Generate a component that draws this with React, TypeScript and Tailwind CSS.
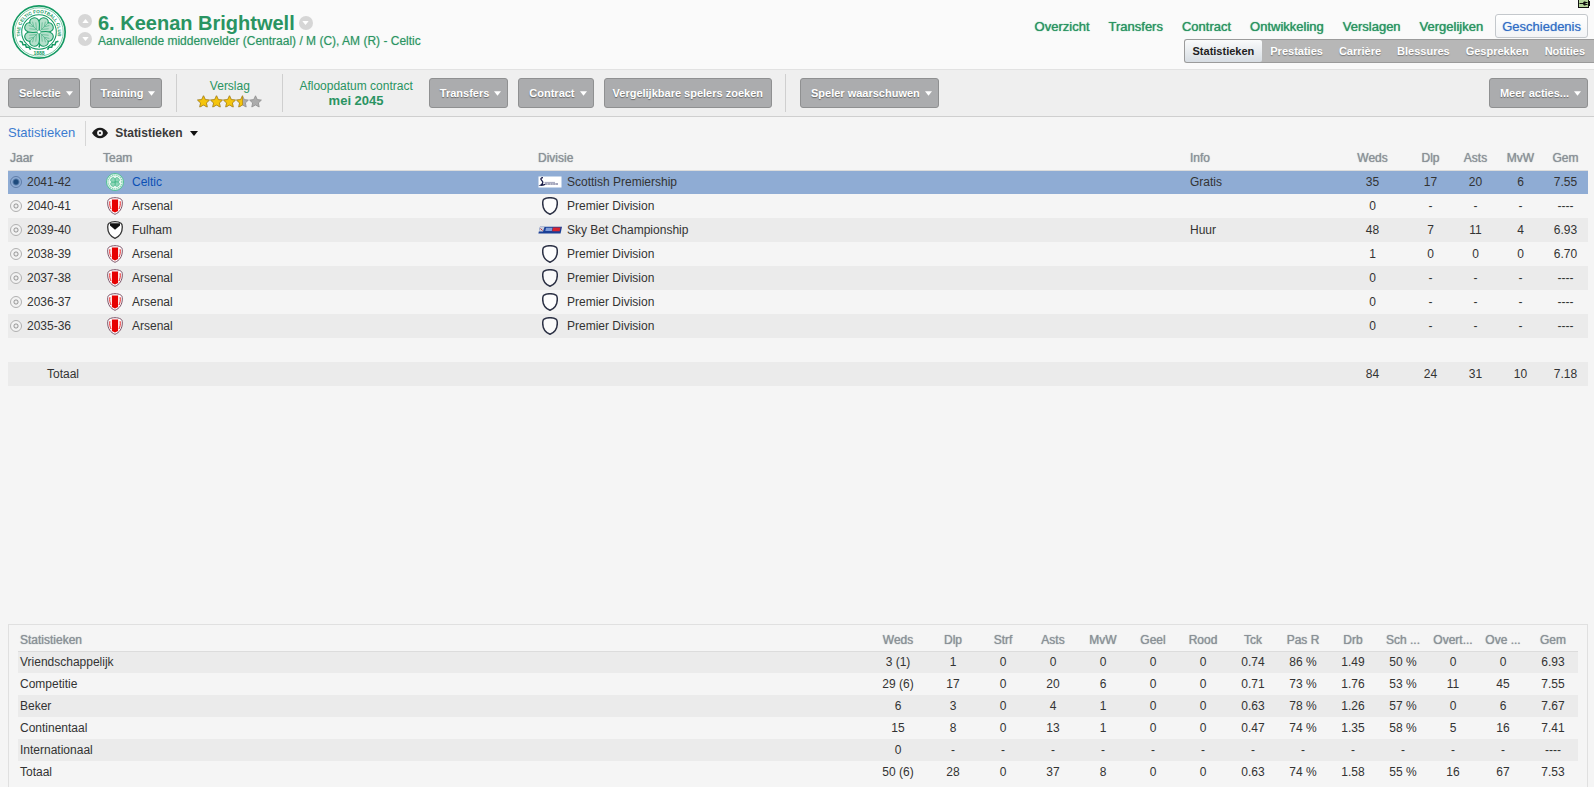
import React, { FC, ReactNode, useState } from 'react';
import clsx from 'clsx';

interface Season {
  year: string;
  team: 'Celtic' | 'Arsenal' | 'Fulham';
  division: string;
  info?: string;
  stats: string[];
}

const seasons: Season[] = [
  { year: '2041-42', team: 'Celtic', division: 'Scottish Premiership', info: 'Gratis', stats: ['35', '17', '20', '6', '7.55'] },
  { year: '2040-41', team: 'Arsenal', division: 'Premier Division', stats: ['0', '-', '-', '-', '----'] },
  { year: '2039-40', team: 'Fulham', division: 'Sky Bet Championship', info: 'Huur', stats: ['48', '7', '11', '4', '6.93'] },
  { year: '2038-39', team: 'Arsenal', division: 'Premier Division', stats: ['1', '0', '0', '0', '6.70'] },
  { year: '2037-38', team: 'Arsenal', division: 'Premier Division', stats: ['0', '-', '-', '-', '----'] },
  { year: '2036-37', team: 'Arsenal', division: 'Premier Division', stats: ['0', '-', '-', '-', '----'] },
  { year: '2035-36', team: 'Arsenal', division: 'Premier Division', stats: ['0', '-', '-', '-', '----'] },
];

const seasonTotal = ['84', '24', '31', '10', '7.18'];

const statColumns = ['Weds', 'Dlp', 'Strf', 'Asts', 'MvW', 'Geel', 'Rood', 'Tck', 'Pas R', 'Drb', 'Sch ...', 'Overt...', 'Ove ...', 'Gem'];

const competitions = [
  { name: 'Vriendschappelijk', stats: ['3 (1)', '1', '0', '0', '0', '0', '0', '0.74', '86 %', '1.49', '50 %', '0', '0', '6.93'] },
  { name: 'Competitie', stats: ['29 (6)', '17', '0', '20', '6', '0', '0', '0.71', '73 %', '1.76', '53 %', '11', '45', '7.55'] },
  { name: 'Beker', stats: ['6', '3', '0', '4', '1', '0', '0', '0.63', '78 %', '1.26', '57 %', '0', '6', '7.67'] },
  { name: 'Continentaal', stats: ['15', '8', '0', '13', '1', '0', '0', '0.47', '74 %', '1.35', '58 %', '5', '16', '7.41'] },
  { name: 'Internationaal', stats: ['0', '-', '-', '-', '-', '-', '-', '-', '-', '-', '-', '-', '-', '----'] },
  { name: 'Totaal', stats: ['50 (6)', '28', '0', '37', '8', '0', '0', '0.63', '74 %', '1.58', '55 %', '16', '67', '7.53'] },
];

const mainNav = ['Overzicht', 'Transfers', 'Contract', 'Ontwikkeling', 'Verslagen', 'Vergelijken', 'Geschiedenis'];
const subNav = ['Statistieken', 'Prestaties', 'Carrière', 'Blessures', 'Gesprekken', 'Notities'];

const Clover = () => (
  <g transform="translate(32 32) scale(1.08)">
    <path d="M0 0C1 6 2 11 0 17" stroke="#149a63" strokeWidth="1.6" fill="none" />
    {[45, 135, 225, 315].map((angle) => (
      <g key={angle} transform={`rotate(${angle})`}>
        <path
          d="M0 0C-3 -3 -9 -6 -9 -11C-9 -16 -2 -18 0 -14C2 -18 9 -16 9 -11C9 -6 3 -3 0 0Z"
          fill="#b5e0cb"
          stroke="#149a63"
          strokeWidth="1.2"
        />
        <path d="M0 -1V-13M0 -4L-5 -10M0 -4L5 -10M0 -8L-3 -13M0 -8L3 -13" stroke="#58b88f" strokeWidth=".8" fill="none" />
      </g>
    ))}
    <circle r="1.6" fill="#fff" />
  </g>
);

const CelticLogo: FC<{ className: string }> = ({ className }) => (
  <svg viewBox="0 0 64 64" className={className} aria-label="Celtic">
    <defs>
      <path id="ring" d="M15.2 46.8A22.4 22.4 0 1 1 48.8 46.8" />
    </defs>
    <circle cx="32" cy="32" r="31" fill="#fff" stroke="#149a63" strokeWidth="2" />
    <circle cx="32" cy="32" r="28.7" fill="none" stroke="#6cc29b" strokeWidth="1" />
    <circle cx="32" cy="32" r="20.5" fill="#fff" stroke="#149a63" strokeWidth="1.2" />
    <text fill="#149a63" fontSize="5.5" fontWeight="bold" fontFamily="Liberation Sans">
      <textPath href="#ring" startOffset="50%" textAnchor="middle">
        THE CELTIC FOOTBALL CLUB
      </textPath>
    </text>
    <Clover />
    <path d="M9 43L12 44L13 47L16 47L17 50L20 50L22 53M55 43L52 44L51 47L48 47L47 50L44 50L42 53" stroke="#149a63" strokeWidth="1.8" fill="none" />
    <text x="32" y="59" textAnchor="middle" fill="#149a63" fontSize="6" fontWeight="bold" fontFamily="Liberation Sans">
      1888
    </text>
  </svg>
);

const SmallCeltic = () => (
  <svg viewBox="0 0 18 18" className="size-[18px]">
    <circle cx="9" cy="9" r="8.5" fill="#e9f7f0" stroke="#4fc193" />
    <circle cx="9" cy="9" r="6.9" fill="none" stroke="#7fd1af" strokeWidth="1.2" strokeDasharray="1.2 .9" />
    <g transform="translate(9 9)">
      {[45, 135, 225, 315].map((angle) => (
        <path key={angle} transform={`rotate(${angle})`} d="M0 0C-3 -2 -3 -5 0 -5C3 -5 3 -2 0 0Z" fill="#8fd6b8" stroke="#35b17f" strokeWidth=".6" />
      ))}
    </g>
  </svg>
);

const SHIELD = 'M2 2.2C4 .9 6.2 .7 8 .7S12 .9 14 2.2C15.2 3 15.3 4 15.3 6C15.3 11.5 12.5 15.5 8 17.3C3.5 15.5 .7 11.5 .7 6C.7 4 .8 3 2 2.2Z';

const TeamCrest: FC<{ team: Season['team'] }> = ({ team }) => {
  if (team === 'Celtic') return <SmallCeltic />;
  if (team === 'Fulham') {
    return (
      <svg viewBox="0 0 16 18" className="h-[18px] w-4">
        <path d={SHIELD} fill="#fff" stroke="#333" strokeWidth="1.3" />
        <path d="M3 2.2H13V4.5L8 8.8L3 4.5Z" fill="#111" />
      </svg>
    );
  }
  return (
    <svg viewBox="0 0 16 18" className="h-[18px] w-4">
      <path d={SHIELD} fill="#fff" stroke="#7c5368" strokeWidth="1" />
      <path d="M4.9 2.6H11.1V14L8 15.6L4.9 14Z" fill="#e60000" />
      <path d="M2.9 4.2C2.5 7.5 2.9 9.8 4 12M13.1 4.2C13.5 7.5 13.1 9.8 12 12" stroke="#e60000" strokeWidth=".9" fill="none" />
    </svg>
  );
};

const DivisionLogo: FC<{ name: string }> = ({ name }) => {
  if (name === 'Scottish Premiership') {
    return (
      <svg viewBox="0 0 24 12" className="h-3 w-6">
        <rect x=".5" y=".5" width="23" height="11" fill="#fff" />
        <path d="M5 1.6C2.8 1.6 2.2 3.2 3.7 4.4C5.2 5.6 5.5 7.5 2.6 9.2C4.5 9.3 6.5 9 7 8.2" stroke="#1b1f4a" strokeWidth="1.3" fill="none" />
        <path d="M6.5 6.4H17" stroke="#8a8dab" strokeWidth=".8" />
        <path d="M7 8H20" stroke="#4c507a" strokeWidth="1.1" strokeDasharray="2.4 .3" />
      </svg>
    );
  }
  if (name === 'Sky Bet Championship') {
    return (
      <svg viewBox="0 0 24 8" className="h-2 w-6">
        <path d="M2 .8H24L22.6 7.4H.4Z" fill="#1a3f96" />
        <path d="M2 1H6.5L5 5.5H.8Z" fill="#c9cfdd" />
        <path d="M2.5 2.5L4.5 4.5" stroke="#c33" strokeWidth="1" />
        <path d="M8 1.8H14.5L13.8 5H7.3Z" fill="#7e9bd6" />
        <path d="M15 1.5H22.5L21.7 5.3H14.2Z" fill="#d8232f" />
      </svg>
    );
  }
  return (
    <svg viewBox="0 0 16 18" className="h-[18px] w-4">
      <path d={SHIELD} fill="#fff" fillOpacity=".75" stroke="#2b3044" strokeWidth="1.5" />
    </svg>
  );
};

const Caret: FC<{ className?: string; up?: boolean }> = ({ className = 'h-[5px] w-2', up }) => (
  <svg viewBox="0 0 8 5" className={className} fill="currentColor">
    <path d={up ? 'M0 5H8L4 0Z' : 'M0 0H8L4 5Z'} />
  </svg>
);

const RoundButton: FC<{ label: string; up?: boolean }> = ({ label, up }) => (
  <button aria-label={label} className="flex size-[14px] items-center justify-center rounded-full bg-[#d6d6d6] text-white">
    <Caret up={up} className="h-1 w-[7px]" />
  </button>
);

const ActionButton: FC<{ children: ReactNode; menu?: boolean }> = ({ children, menu = true }) => (
  <button
    className={clsx(
      'flex h-[30px] items-center gap-[5px] rounded-[3px] border border-[#8f9091] bg-[#abacae] text-[11px] font-bold text-white [text-shadow:0_1px_1px_#666]',
      menu ? 'pr-[6px] pl-[10px]' : 'px-2',
    )}
  >
    {children}
    {menu && <Caret className="mt-px h-[5px] w-[7px]" />}
  </button>
);

const STAR = 'M6.5 .8L8.3 4.6L12.4 5.1L9.4 7.9L10.2 12L6.5 10L2.8 12L3.6 7.9L.6 5.1L4.7 4.6Z';

const Stars = () => (
  <div className="flex" role="img" aria-label="3,5 sterren">
    {[1, 1, 1, 0.5, 0].map((fill, i) => (
      <svg key={i} viewBox="0 0 13 13" className="size-[13px]">
        <path d={STAR} fill="#acacac" stroke="#8e8e8e" strokeWidth=".8" />
        {fill > 0 && (
          <path
            d={fill === 1 ? STAR : 'M6.5 .8V10L2.8 12L3.6 7.9L.6 5.1L4.7 4.6Z'}
            fill="#f5c50c"
            stroke="#b98d12"
            strokeWidth=".8"
          />
        )}
      </svg>
    ))}
  </div>
);

const Divider = () => <div className="h-[38px] w-px bg-[#cfcfcf]" />;

const PlayerHeader = () => (
  <header className="flex h-[70px] items-start justify-between border-b border-[#e2e2e2] bg-[#fafafa]">
    <div className="flex pt-[5px] pl-3 text-[#2a9462]">
      <CelticLogo className="size-[54px]" />
      <div className="mt-[9px] ml-3 flex flex-col gap-1">
        <RoundButton label="Vorige speler" up />
        <RoundButton label="Volgende speler" />
      </div>
      <div className="mt-[6px] ml-[6px]">
        <div className="flex items-center gap-1">
          <h1 className="text-[20px] leading-6 font-bold">6. Keenan Brightwell</h1>
          <RoundButton label="Spelermenu" />
        </div>
        <p className="leading-[12px] [text-shadow:0_0_1px_#2a946266]">
          Aanvallende middenvelder (Centraal) / M (C), AM (R) - Celtic
        </p>
      </div>
    </div>
    <div className="relative flex flex-col items-end pt-[14px]">
      <svg viewBox="0 0 12 8" className="absolute top-0 right-1 h-2 w-3">
        <rect x=".5" y="-1" width="10" height="8.5" fill="#b4d49a" stroke="#111" />
        <path d="M11 1H12V6H11Z" fill="#111" />
        <path d="M1.5 3.5H5" stroke="#111" fill="none" />
        <path d="M4.5 3.5L6 1.5H7.5V5.5H6ZM7.5 2H9.5V3H7.5ZM7.5 4H9.5V5H7.5Z" fill="#111" />
      </svg>
      <nav className="flex gap-[5px] pr-[6px] text-[13px]">
        {mainNav.map((item) => (
          <a
            key={item}
            href="#"
            className={clsx(
              'flex h-6 items-center rounded-[3px] border px-[6px] pt-px',
              item === 'Geschiedenis'
                ? 'border-[#c4c8cc] bg-linear-to-b from-white to-[#f3f4f6] text-[#2f6cc5] [text-shadow:0_0_1px_#2f6cc599]'
                : 'border-transparent text-[#2a9462] [text-shadow:0_0_1px_#2a9462]',
            )}
          >
            {item}
          </a>
        ))}
      </nav>
      <nav className="mt-px flex h-6 rounded-l-[3px] border border-r-0 border-[#9b9b9b] bg-[#b7b7b7] pr-px text-[11px] font-bold">
        {subNav.map((item) => (
          <a
            key={item}
            href="#"
            className={clsx(
              'flex items-center px-2',
              item === 'Statistieken'
                ? 'rounded-[2px] bg-linear-to-b from-[#fafbfb] to-[#d7dde3] text-[#222]'
                : 'text-white [text-shadow:0_1px_1px_#777]',
            )}
          >
            {item}
          </a>
        ))}
      </nav>
    </div>
  </header>
);

const Toolbar = () => (
  <div className="flex h-[47px] items-center border-b border-[#cfcfcf] bg-[#efefef] pr-[6px] pl-2">
    <div className="flex gap-[10px]">
      <ActionButton>Selectie</ActionButton>
      <ActionButton>Training</ActionButton>
    </div>
    <div className="ml-[14px] flex items-center">
      <Divider />
      <div className="flex w-[105px] flex-col items-center gap-px text-[#2a9462]">
        <span className="leading-4">Verslag</span>
        <Stars />
      </div>
      <Divider />
    </div>
    <div className="mx-4 flex flex-col items-center text-[#2a9462]">
      <span className="leading-4">Afloopdatum contract</span>
      <span className="text-[13px] leading-[14px] font-bold">mei 2045</span>
    </div>
    <div className="flex gap-[10px]">
      <ActionButton>Transfers</ActionButton>
      <ActionButton>Contract</ActionButton>
      <ActionButton menu={false}>Vergelijkbare spelers zoeken</ActionButton>
    </div>
    <div className="ml-[13px] flex items-center gap-[14px]">
      <Divider />
      <ActionButton>Speler waarschuwen</ActionButton>
    </div>
    <div className="ml-auto">
      <ActionButton>Meer acties...</ActionButton>
    </div>
  </div>
);

const ViewBar = () => (
  <div className="flex h-[29px] items-center px-2 pt-[3px] text-[13px]">
    <a href="#" className="text-[#3b7bd0]">
      Statistieken
    </a>
    <div className="mr-[6px] ml-[10px] h-[25px] w-px bg-[#d6d6d6]" />
    <button className="flex items-center gap-[7px] text-[12px] font-bold text-[#3a3a3a]">
      <svg viewBox="0 0 16 12" className="h-3 w-4">
        <path d="M0 6C2.5 2.2 5 .7 8 .7S13.5 2.2 16 6C13.5 9.8 11 11.3 8 11.3S2.5 9.8 0 6Z" fill="#1c1c1c" />
        <circle cx="8" cy="6" r="2.9" fill="#f5f5f5" />
        <circle cx="8" cy="6" r="1.1" fill="#1c1c1c" />
      </svg>
      Statistieken
      <Caret className="mt-px h-[5px] w-2 text-[#111]" />
    </button>
  </div>
);

const SeasonTable = () => {
  const [selected, setSelected] = useState('2041-42');

  return (
    <table className="w-full table-fixed border-collapse text-center">
      <colgroup>
        <col className="w-[92px]" />
        <col className="w-[435px]" />
        <col />
        <col className="w-[150px]" />
        <col className="w-[71px]" />
        <col className="w-[45px]" />
        <col className="w-[45px]" />
        <col className="w-[45px]" />
        <col className="w-[45px]" />
      </colgroup>
      <thead>
        <tr className="h-6 border-b border-[#dcdcdc] text-[#8a9197] [text-shadow:0_0_1px_#8a9197]">
          <th className="pl-[2px] text-left font-normal">Jaar</th>
          <th className="pl-[3px] text-left font-normal">Team</th>
          <th className="pl-[3px] text-left font-normal">Divisie</th>
          <th className="pl-[3px] text-left font-normal">Info</th>
          {['Weds', 'Dlp', 'Asts', 'MvW', 'Gem'].map((col) => (
            <th key={col} className="font-normal">
              {col}
            </th>
          ))}
        </tr>
      </thead>
      <tbody>
        {seasons.map((season, i) => (
          <tr key={season.year} className={clsx('h-6', season.year === selected ? 'bg-[#8facd4]' : i % 2 === 0 && 'bg-[#ebebeb]')}>
            <td className="pl-[2px]">
              <label className="flex items-center gap-[5px]">
                <input
                  type="radio"
                  name="season"
                  checked={season.year === selected}
                  onChange={() => setSelected(season.year)}
                  className="size-3 appearance-none rounded-full border border-[#b0b0b0] bg-[radial-gradient(circle,#eee_1px,#9a9a9a_2px,#9a9a9a_2px,#f3f3f3_3px)] checked:border-[#5f7da8] checked:bg-[radial-gradient(circle,#1d4a7c_2px,#8facd4_4px)]"
                />
                {season.year}
              </label>
            </td>
            <td className="pl-[3px]">
              <div className="flex items-center gap-[5px]">
                <span className="flex w-6 justify-center">
                  <TeamCrest team={season.team} />
                </span>
                <a href="#" className={season.team === 'Celtic' ? 'text-[#0b50b5]' : undefined}>
                  {season.team}
                </a>
              </div>
            </td>
            <td className="pl-[3px]">
              <div className="flex items-center gap-[5px]">
                <span className="flex w-6 justify-center">
                  <DivisionLogo name={season.division} />
                </span>
                {season.division}
              </div>
            </td>
            <td className="pl-[3px] text-left">{season.info}</td>
            {season.stats.map((value, j) => (
              <td key={j}>{value}</td>
            ))}
          </tr>
        ))}
      </tbody>
      <tfoot>
        <tr className="h-6">
          <td colSpan={9} />
        </tr>
        <tr className="h-6 bg-[#ebebeb]">
          <td colSpan={4} className="pl-[39px] text-left">
            Totaal
          </td>
          {seasonTotal.map((value, j) => (
            <td key={j}>{value}</td>
          ))}
        </tr>
      </tfoot>
    </table>
  );
};

const CompetitionPanel = () => (
  <section className="mt-auto mr-[6px] ml-2 border border-b-0 border-[#e0e0e0] px-[9px] pt-1 pb-1">
    <table className="w-full table-fixed border-collapse text-center">
      <colgroup>
        <col />
        <col className="w-[60px]" />
        {statColumns.slice(1).map((col) => (
          <col key={col} className="w-[50px]" />
        ))}
      </colgroup>
      <thead>
        <tr className="h-[22px] border-b border-[#dcdcdc] text-[#8a9197] [text-shadow:0_0_1px_#8a9197]">
          <th className="pl-[2px] text-left font-normal">Statistieken</th>
          {statColumns.map((col) => (
            <th key={col} className="font-normal whitespace-nowrap">
              {col}
            </th>
          ))}
        </tr>
      </thead>
      <tbody>
        {competitions.map((row) => (
          <tr key={row.name} className="h-[22px] odd:bg-[#ebebeb]">
            <td className="pl-[2px] text-left">{row.name}</td>
            {row.stats.map((value, j) => (
              <td key={j}>{value}</td>
            ))}
          </tr>
        ))}
      </tbody>
    </table>
  </section>
);

export default function App() {
  return (
    <div className="flex min-h-screen flex-col bg-[#f5f5f5] font-['Liberation_Sans',Arial,sans-serif] text-[12px] leading-4 text-[#333]">
      <PlayerHeader />
      <Toolbar />
      <ViewBar />
      <main className="flex grow flex-col">
        <div className="pr-[6px] pb-6 pl-2">
          <SeasonTable />
        </div>
        <CompetitionPanel />
      </main>
    </div>
  );
}
